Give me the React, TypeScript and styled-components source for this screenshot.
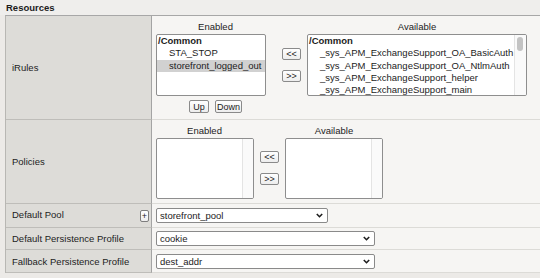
import React from "react";
import styled, { createGlobalStyle } from "styled-components";

const Global = createGlobalStyle`
  html, body { margin: 0; padding: 0; }
  body {
    background: #eceae7;
    font-family: "Liberation Sans", Arial, Helvetica, sans-serif;
    font-size: 9.5px;
    color: #1c1c1c;
    width: 540px;
    height: 278px;
    overflow: hidden;
  }
`;

const Page = styled.div`
  width: 540px;
`;

const Header = styled.div`
  height: 15px;
  line-height: 15px;
  padding-left: 6px;
  font-weight: bold;
  background: #efeeec;
`;

const Table = styled.div`
  margin-left: 5px;
  border-top: 1px solid #a7a7a7;
  border-left: 1px solid #b8b7b3;
`;

const Row = styled.div<{ $h: number }>`
  display: grid;
  grid-template-columns: 146px 1fr;
  height: ${(p) => p.$h}px;
`;

const LabelCell = styled.div`
  box-sizing: border-box;
  background: #dddcd8;
  border-right: 1px solid #a4a4a4;
  border-bottom: 1px solid #bebdb9;
  display: flex;
  align-items: center;
  justify-content: space-between;
  padding: 0 2px 0 6px;
`;

const LabelText = styled.span<{ $raise?: number }>`
  margin-bottom: ${(p) => (p.$raise ?? 0) * 2}px;
`;

const ValueCell = styled.div<{ $top?: boolean }>`
  box-sizing: border-box;
  background: #f6f5f3;
  border-bottom: 1px solid #dcdbd7;
  padding-left: 4px;
  display: flex;
  align-items: ${(p) => (p.$top ? "flex-start" : "center")};
  padding-top: ${(p) => (p.$top ? 5 : 0)}px;
`;

const Column = styled.div<{ $w: number }>`
  width: ${(p) => p.$w}px;
  display: flex;
  flex-direction: column;
  align-items: center;
`;

const ColLabel = styled.div`
  height: 11px;
  line-height: 11px;
  margin-bottom: 2px;
  text-align: center;
`;

const ListBox = styled.div<{ $w: number; $h: number }>`
  align-self: flex-start;
  box-sizing: border-box;
  width: ${(p) => p.$w}px;
  height: ${(p) => p.$h}px;
  background: #ffffff;
  border: 1px solid #8e8e8e;
  border-radius: 2px;
  display: flex;
  overflow: hidden;
`;

const ListContent = styled.div`
  flex: 1;
  min-width: 0;
  padding-top: 0;
`;

const Group = styled.div`
  font-weight: bold;
  line-height: 12.3px;
  padding-left: 1px;
  white-space: nowrap;
`;

const Option = styled.div<{ $selected?: boolean }>`
  line-height: 12.3px;
  padding-left: 12px;
  white-space: nowrap;
  background: ${(p) => (p.$selected ? "#d1d1d1" : "transparent")};
`;

const Gutter = styled.div<{ $w: number }>`
  width: ${(p) => p.$w}px;
  flex-shrink: 0;
  box-sizing: border-box;
  background: #fafafa;
  border-left: 1px solid #e4e4e4;
  padding: 2px 0 0 2px;
`;

const Thumb = styled.div`
  width: 6px;
  height: 14px;
  border-radius: 3px;
  background: #c3c3c3;
`;

const MidCol = styled.div<{ $top: number }>`
  display: flex;
  flex-direction: column;
  gap: 10px;
  margin: ${(p) => p.$top}px 6px 0 7px;
`;

const SmallButton = styled.button<{ $w: number; $h?: number }>`
  box-sizing: border-box;
  width: ${(p) => p.$w}px;
  height: ${(p) => p.$h ?? 12}px;
  padding: 0;
  border: 1px solid #8a8a8a;
  border-radius: 2px;
  background: linear-gradient(#ffffff, #ededed);
  font-family: "Liberation Sans", Arial, sans-serif;
  font-size: 9px;
  line-height: 10px;
  color: #1c1c1c;
`;

const UpDown = styled.div`
  display: flex;
  gap: 6px;
  margin-top: 4px;
`;

const PlusButton = styled.button`
  box-sizing: border-box;
  width: 9px;
  height: 12px;
  padding: 0;
  border: 1px solid #7d7d7d;
  border-radius: 2px;
  background: linear-gradient(#ffffff, #eeeeee);
  font-family: "Liberation Sans", Arial, sans-serif;
  font-size: 9px;
  line-height: 10px;
  color: #1c1c1c;
`;

const Select = styled.div<{ $w: number }>`
  box-sizing: border-box;
  width: ${(p) => p.$w}px;
  height: 15px;
  background: #ffffff;
  border: 1px solid #8a8a8a;
  border-radius: 2px;
  display: flex;
  align-items: center;
  justify-content: space-between;
  padding: 0 4px 0 3px;
`;

const Chevron = () => (
  <svg width="7" height="5" viewBox="0 0 7 5">
    <path d="M0.8 1 L3.5 3.7 L6.2 1" fill="none" stroke="#1e1e1e" strokeWidth="1.6" />
  </svg>
);

const available = [
  "_sys_APM_ExchangeSupport_OA_BasicAuth",
  "_sys_APM_ExchangeSupport_OA_NtlmAuth",
  "_sys_APM_ExchangeSupport_helper",
  "_sys_APM_ExchangeSupport_main",
];

export default function App() {
  return (
    <Page>
      <Global />
      <Header>Resources</Header>
      <Table>
        <Row $h={104}>
          <LabelCell>
            <LabelText>iRules</LabelText>
          </LabelCell>
          <ValueCell $top>
            <Column $w={119}>
              <ColLabel>Enabled</ColLabel>
              <ListBox $w={110} $h={62}>
                <ListContent>
                  <Group>/Common</Group>
                  <Option>STA_STOP</Option>
                  <Option $selected>storefront_logged_out</Option>
                </ListContent>
              </ListBox>
              <UpDown>
                <SmallButton $w={20} $h={13}>Up</SmallButton>
                <SmallButton $w={27} $h={13}>Down</SmallButton>
              </UpDown>
            </Column>
            <MidCol $top={27}>
              <SmallButton $w={19}>&lt;&lt;</SmallButton>
              <SmallButton $w={19}>&gt;&gt;</SmallButton>
            </MidCol>
            <Column $w={220}>
              <ColLabel>Available</ColLabel>
              <ListBox $w={220} $h={62}>
                <ListContent>
                  <Group>/Common</Group>
                  {available.map((a) => (
                    <Option key={a}>{a}</Option>
                  ))}
                </ListContent>
                <Gutter $w={12}>
                  <Thumb />
                </Gutter>
              </ListBox>
            </Column>
          </ValueCell>
        </Row>
        <Row $h={84}>
          <LabelCell>
            <LabelText>Policies</LabelText>
          </LabelCell>
          <ValueCell $top>
            <Column $w={97}>
              <ColLabel>Enabled</ColLabel>
              <ListBox $w={98} $h={61}>
                <ListContent />
                <Gutter $w={11} />
              </ListBox>
            </Column>
            <MidCol $top={26}>
              <SmallButton $w={19}>&lt;&lt;</SmallButton>
              <SmallButton $w={19}>&gt;&gt;</SmallButton>
            </MidCol>
            <Column $w={98}>
              <ColLabel>Available</ColLabel>
              <ListBox $w={98} $h={61}>
                <ListContent />
                <Gutter $w={11} />
              </ListBox>
            </Column>
          </ValueCell>
        </Row>
        <Row $h={24}>
          <LabelCell>
            <LabelText $raise={1}>Default Pool</LabelText>
            <PlusButton>+</PlusButton>
          </LabelCell>
          <ValueCell>
            <Select $w={172}>
              <span>storefront_pool</span>
              <Chevron />
            </Select>
          </ValueCell>
        </Row>
        <Row $h={22}>
          <LabelCell>
            <LabelText>Default Persistence Profile</LabelText>
          </LabelCell>
          <ValueCell>
            <Select $w={219}>
              <span>cookie</span>
              <Chevron />
            </Select>
          </ValueCell>
        </Row>
        <Row $h={23}>
          <LabelCell>
            <LabelText>Fallback Persistence Profile</LabelText>
          </LabelCell>
          <ValueCell>
            <Select $w={219}>
              <span>dest_addr</span>
              <Chevron />
            </Select>
          </ValueCell>
        </Row>
      </Table>
    </Page>
  );
}
